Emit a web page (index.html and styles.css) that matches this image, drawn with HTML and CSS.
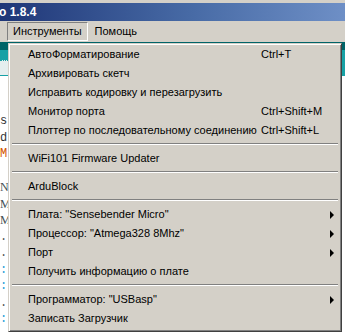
FILE: index.html
```html
<!DOCTYPE html>
<html lang="ru">
<head>
    <meta charset="UTF-8">
    <title>Arduino 1.8.4</title>
    <link rel="stylesheet" href="styles.css">
</head>
<body>
    <div class="window">
        <div class="frame-top"></div>
        <div class="title-bar">o 1.8.4</div>
        <div class="menu-bar">
            <span class="menu-title open">Инструменты</span>
            <span class="menu-title">Помощь</span>
        </div>

        <div class="workspace">
            <!-- editor behind the open menu, only its edges show -->
            <div class="editor">
                <div class="editor-head"></div>
                <div class="editor-tabs"><span></span></div>
                <div class="editor-code">
                    <div class="code-line"></div>
                    <div class="code-line"></div>
                    <div class="code-line">s</div>
                    <div class="code-line">d</div>
                    <div class="code-line orange">M</div>
                    <div class="code-line"></div>
                    <div class="code-line mono">N</div>
                    <div class="code-line mono">M</div>
                    <div class="code-line mono">M</div>
                    <div class="code-line dot">.</div>
                    <div class="code-line dot">.</div>
                    <div class="code-line dot blue">:</div>
                    <div class="code-line dot blue">:</div>
                    <div class="code-line dot">.</div>
                    <div class="code-line dot blue">:</div>
                </div>
            </div>

            <div class="popup">
                <div class="item"><span class="label">АвтоФорматирование</span><span class="accel">Ctrl+T</span></div>
                <div class="item"><span class="label">Архивировать скетч</span></div>
                <div class="item"><span class="label">Исправить кодировку и перезагрузить</span></div>
                <div class="item"><span class="label">Монитор порта</span><span class="accel">Ctrl+Shift+M</span></div>
                <div class="item"><span class="label">Плоттер по последовательному соединению</span><span class="accel">Ctrl+Shift+L</span></div>
                <div class="separator"></div>
                <div class="item"><span class="label">WiFi101 Firmware Updater</span></div>
                <div class="separator"></div>
                <div class="item"><span class="label">ArduBlock</span></div>
                <div class="separator"></div>
                <div class="item sub"><span class="label">Плата: "Sensebender Micro"</span></div>
                <div class="item sub"><span class="label">Процессор: "Atmega328 8Mhz"</span></div>
                <div class="item sub"><span class="label">Порт</span></div>
                <div class="item"><span class="label">Получить информацию о плате</span></div>
                <div class="separator"></div>
                <div class="item sub"><span class="label">Программатор: "USBasp"</span></div>
                <div class="item"><span class="label">Записать Загрузчик</span></div>
            </div>
        </div>
    </div>
</body>
</html>
```

FILE: styles.css
```css
body {
    margin: 0;
    padding: 0;
    background: #d4d0c8;
    font-family: 'Liberation Sans', Arial, sans-serif;
    font-size: 11px;
    color: #000;
    overflow: hidden;
}

.window {
    width: 345px;
    height: 332px;
    display: flex;
    flex-direction: column;
}

.frame-top {
    height: 3px;
    background: #d4d0c8;
}

.title-bar {
    height: 18px;
    line-height: 18px;
    background: linear-gradient(to right, #1f3677, #476aa5 55%, #6e8fc6);
    color: #fff;
    font-weight: bold;
    font-size: 12px;
    margin-left: -1px;
}

.menu-bar {
    height: 21px;
    display: flex;
    align-items: center;
    padding-left: 7px;
}

.menu-title {
    height: 17px;
    line-height: 17px;
    padding: 0 5px;
    border: 1px solid transparent;
    margin-right: 1px;
}

.menu-title.open {
    border-color: #808080 #fff #fff #808080;
}

.workspace {
    flex: 1;
    position: relative;
}

.editor {
    height: 100%;
    background: #fff;
    display: flex;
    flex-direction: column;
}

.editor-head {
    height: 8px;
    background: #006468;
}

.editor-tabs {
    height: 26px;
    background: #17a1a5;
    padding-top: 10px;
    box-sizing: border-box;
}

.editor-tabs span {
    display: block;
    background: #e5eeee;
    width: 8px;
    height: 14px;
    border-top: 1px dotted #17a1a5;
}

.editor-code {
    padding-top: 4px;
    font-family: 'Liberation Mono', monospace;
    font-size: 12px;
}

.code-line {
    height: 16.5px;
    line-height: 16px;
    color: #333;
    width: 8px;
}

.code-line.orange { color: #d35400; }
.code-line.mono { font-family: 'Liberation Serif', serif; color: #434f54; }
.code-line.dot { color: #555; }
.code-line.blue { color: #2a9fd6; }

.popup {
    position: absolute;
    top: 1px;
    left: 8px;
    width: 334px;
    height: 289px;
    background: #d4d0c8;
    border: 1px solid;
    border-color: #d4d0c8 #404040 #404040 #d4d0c8;
    box-shadow: inset 1px 1px 0 #fff, inset -1px -1px 0 #808080;
    padding: 1px 2px;
    box-sizing: border-box;
}

.item {
    height: 19px;
    line-height: 18px;
    display: flex;
    position: relative;
    padding-left: 17px;
}

.label {
    flex: 1;
    white-space: nowrap;
}

.accel {
    position: absolute;
    left: 250px;
    white-space: nowrap;
}

.item.sub::after {
    content: "";
    position: absolute;
    right: 5px;
    top: 6px;
    border-left: 4px solid #000;
    border-top: 4px solid transparent;
    border-bottom: 4px solid transparent;
}

.separator {
    height: 0;
    margin: 3px 1px 4px 1px;
    border-top: 1px solid #808080;
    border-bottom: 1px solid #fff;
}
```
